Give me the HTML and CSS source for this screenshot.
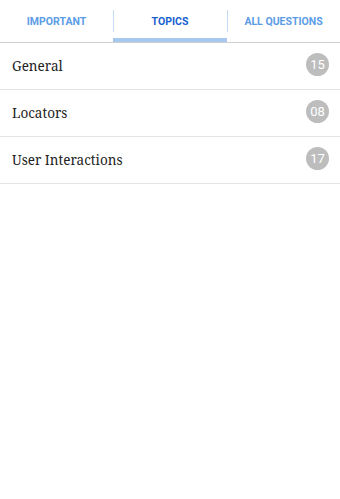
FILE: index.html
```html
<!DOCTYPE html>
<html>
<head>
<meta charset="utf-8">
<link rel="stylesheet" href="styles.css">
</head>
<body>
<div class="tabs">
  <div class="tab">IMPORTANT</div>
  <div class="tab active">TOPICS</div>
  <div class="tab">ALL QUESTIONS</div>
</div>
<ul class="list">
  <li class="row"><span class="title">General</span><span class="badge">15</span></li>
  <li class="row"><span class="title">Locators</span><span class="badge">08</span></li>
  <li class="row"><span class="title">User Interactions</span><span class="badge">17</span></li>
</ul>
</body>
</html>
```
FILE: styles.css
```css
html, body {
  margin: 0;
  padding: 0;
  background: #ffffff;
}
body {
  width: 340px;
  height: 499px;
  overflow: hidden;
}
.tabs {
  display: flex;
  height: 42px;
  border-bottom: 1px solid #cfcfcf;
  box-sizing: content-box;
}
.tab {
  position: relative;
  flex: 0 0 auto;
  width: 113px;
  display: flex;
  align-items: center;
  justify-content: center;
  padding-top: 1px;
  font-family: Roboto, "Liberation Sans", sans-serif;
  font-weight: 700;
  font-size: 10.5px;
  color: #5c9ce6;
  box-sizing: border-box;
}
.tab:nth-child(2) {
  width: 114px;
}
.tab + .tab::before {
  content: "";
  position: absolute;
  left: 0;
  top: 10px;
  height: 22px;
  width: 1px;
  background: #c5dcf5;
}
.tab.active {
  color: #1a5fd0;
}
.tab.active::after {
  content: "";
  position: absolute;
  left: 0;
  right: 0;
  bottom: 0;
  height: 4px;
  background: #a6c8ef;
}
.list {
  list-style: none;
  margin: 0;
  padding: 0;
}
.row {
  display: flex;
  align-items: center;
  justify-content: space-between;
  height: 46px;
  padding: 0 11px 0 12px;
  border-bottom: 1px solid #e4e4e4;
}
.title {
  font-family: "Noto Serif", "Liberation Serif", serif;
  font-size: 13.5px;
  color: #222222;
}
.badge {
  width: 23px;
  height: 23px;
  border-radius: 50%;
  background: #bdbdbd;
  color: #ffffff;
  font-family: Roboto, "Liberation Sans", sans-serif;
  font-size: 13px;
  display: flex;
  align-items: center;
  justify-content: center;
  margin-top: -4px;
}
```
